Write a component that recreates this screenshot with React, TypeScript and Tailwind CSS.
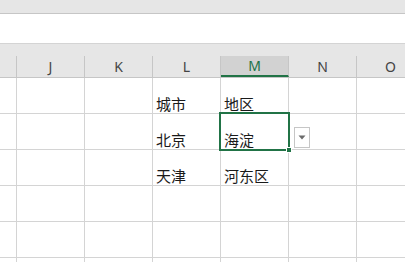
import React from "react";

const cols = [
  { name: "", w: "w-[17px]" },
  { name: "J", w: "w-[68px]" },
  { name: "K", w: "w-[68px]" },
  { name: "L", w: "w-[68px]" },
  { name: "M", w: "w-[68px]" },
  { name: "N", w: "w-[68px]" },
  { name: "O", w: "w-[68px]" },
];

const rows: Record<string, string>[] = [
  { L: "城市", M: "地区" },
  { L: "北京", M: "海淀" },
  { L: "天津", M: "河东区" },
  {},
  {},
  {},
];

export default function App() {
  return (
    <div className="relative w-[405px] h-[262px] overflow-hidden bg-white font-['Noto_Sans','Noto_Sans_CJK_SC',sans-serif]">
      {/* ribbon edge + formula bar */}
      <div className="h-[14px] bg-[#e6e6e6] border-b border-[#c6c6c6]" />
      <div className="h-[30px] bg-white border-b border-[#d4d4d4]" />
      <div className="h-[12px] bg-[#e6e6e6]" />

      {/* column headers */}
      <div className="flex h-[22px] bg-[#e6e6e6] border-b border-[#c6c6c6]">
        {cols.map((c) =>
          c.name === "M" ? (
            <div
              key={c.name}
              className={`${c.w} shrink-0 border-r border-[#c6c6c6] bg-[#d2d2d2] border-b-2 border-b-[#217346] flex items-center justify-center text-[14px] text-[#217346]`}
            >
              {c.name}
            </div>
          ) : (
            <div
              key={c.name || "corner"}
              className={`${c.w} shrink-0 border-r border-[#c6c6c6] flex items-center justify-center text-[14px] text-[#444]`}
            >
              {c.name}
            </div>
          )
        )}
      </div>

      {/* grid */}
      {rows.map((r, i) => (
        <div key={i} className="flex h-[36px] border-b border-[#d4d4d4]">
          {cols.map((c) => (
            <div
              key={c.name || "corner"}
              className={`${c.w} shrink-0 border-r border-[#d4d4d4] flex items-end pl-[3px] text-[15px] leading-[18px] text-[#1a1a1a] font-['Noto_Sans_CJK_SC',sans-serif]`}
            >
              {r[c.name] ?? ""}
            </div>
          ))}
        </div>
      ))}

      {/* active cell */}
      <div className="absolute left-[219px] top-[112px] w-[71px] h-[39px] border-2 border-[#217346]" />
      <div className="absolute left-[286px] top-[147px] w-[6px] h-[6px] bg-[#217346] border border-white" />

      {/* validation dropdown */}
      <div className="absolute left-[294px] top-[127px] w-[16px] h-[21px] bg-white border border-[#c6c6c6] flex items-center justify-center">
        <svg width="8" height="5" viewBox="0 0 8 5">
          <path d="M0.5 0.5h7L4 4.5z" fill="#6b6b6b" />
        </svg>
      </div>
    </div>
  );
}
